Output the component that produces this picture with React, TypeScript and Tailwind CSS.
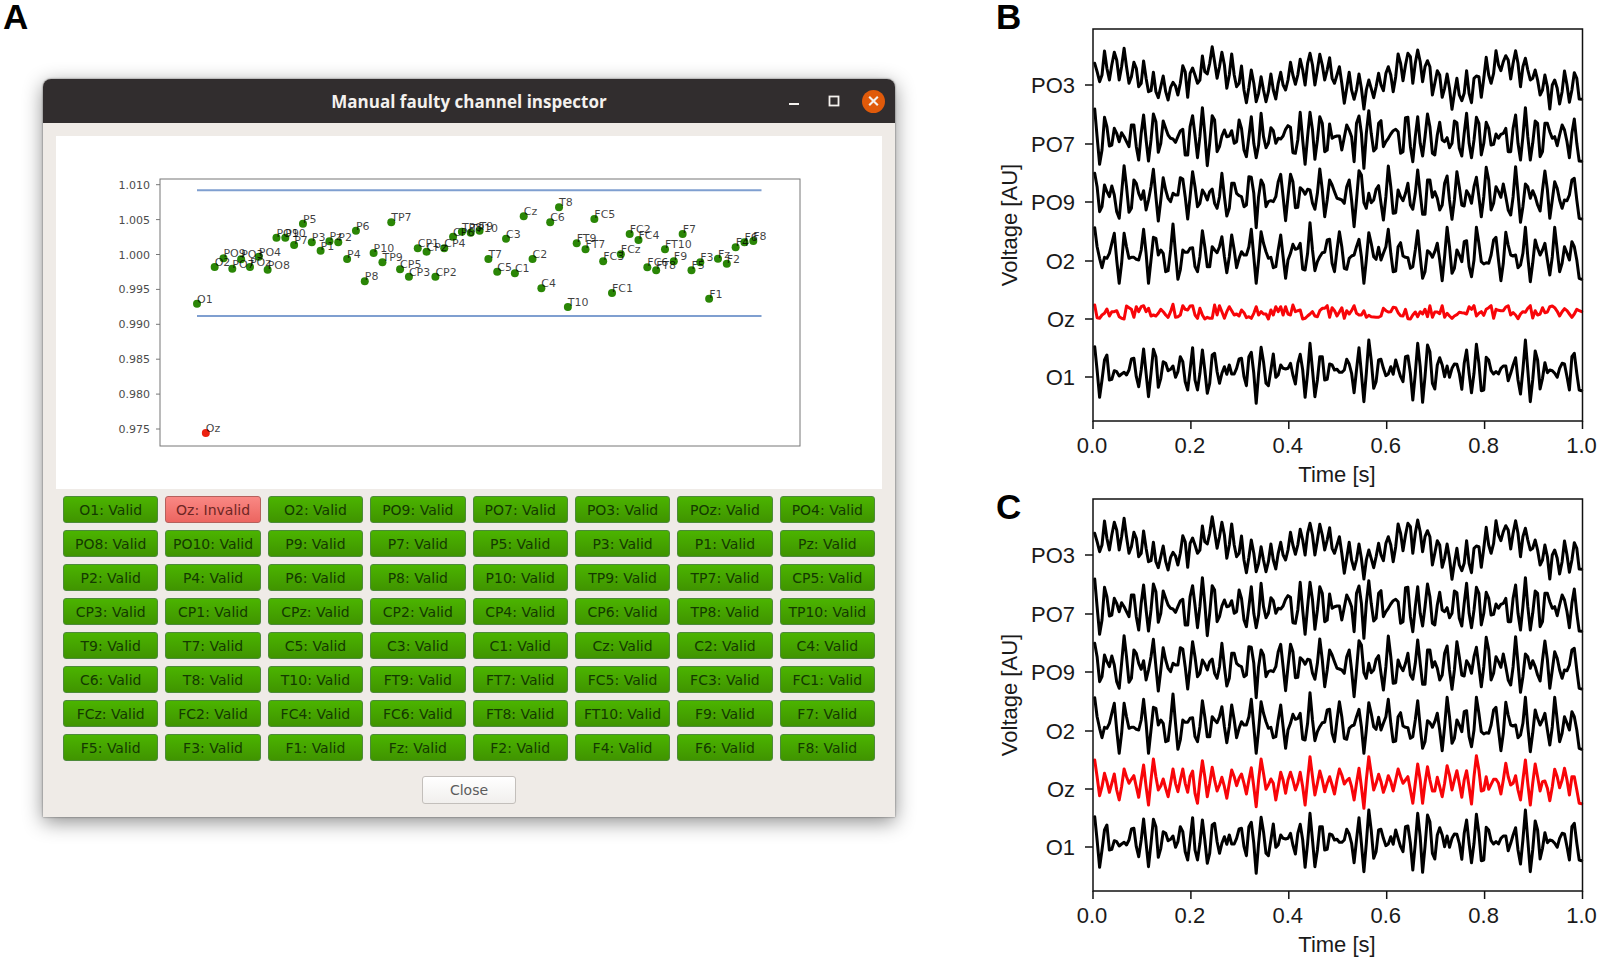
import { useState } from "react";

type Channel = { name: string; level: number };

// level is the vertical position of the channel inside the scatter plot
const channels: Channel[] = [
  { name: "O1", level: 401 }, { name: "Oz", level: 789 }, { name: "O2", level: 291 }, { name: "PO9", level: 265 },
  { name: "PO7", level: 296 }, { name: "PO3", level: 268 }, { name: "POz", level: 291 }, { name: "PO4", level: 260 },
  { name: "PO8", level: 299 }, { name: "PO10", level: 203 }, { name: "P9", level: 203 }, { name: "P7", level: 225 },
  { name: "P5", level: 161 }, { name: "P3", level: 217 }, { name: "P1", level: 242 }, { name: "Pz", level: 214 },
  { name: "P2", level: 217 }, { name: "P4", level: 267 }, { name: "P6", level: 182 }, { name: "P8", level: 334 },
  { name: "P10", level: 249 }, { name: "TP9", level: 277 }, { name: "TP7", level: 157 }, { name: "CP5", level: 298 },
  { name: "CP3", level: 320 }, { name: "CP1", level: 235 }, { name: "CPz", level: 245 }, { name: "CP2", level: 320 },
  { name: "CP4", level: 235 }, { name: "CP6", level: 200 }, { name: "TP8", level: 185 }, { name: "TP10", level: 188 },
  { name: "T9", level: 182 }, { name: "T7", level: 267 }, { name: "C5", level: 305 }, { name: "C3", level: 206 },
  { name: "C1", level: 310 }, { name: "Cz", level: 139 }, { name: "C2", level: 267 }, { name: "C4", level: 355 },
  { name: "C6", level: 157 }, { name: "T8", level: 112 }, { name: "T10", level: 411 }, { name: "FT9", level: 220 },
  { name: "FT7", level: 238 }, { name: "FC5", level: 147 }, { name: "FC3", level: 274 }, { name: "FC1", level: 369 },
  { name: "FCz", level: 253 }, { name: "FC2", level: 192 }, { name: "FC4", level: 210 }, { name: "FC6", level: 292 },
  { name: "FT8", level: 301 }, { name: "FT10", level: 238 }, { name: "F9", level: 274 }, { name: "F7", level: 192 },
  { name: "F5", level: 301 }, { name: "F3", level: 277 }, { name: "F1", level: 386 }, { name: "Fz", level: 266 },
  { name: "F2", level: 281 }, { name: "F4", level: 232 }, { name: "F6", level: 217 }, { name: "F8", level: 213 },
];

const scatterTicks = ["1.010", "1.005", "1.000", "0.995", "0.990", "0.985", "0.980", "0.975"];

// One second of signal per channel, sampled every 5 ms
const po3 = [
  190, 215, 245, 225, 153, 205, 240, 195, 157, 180, 240, 200, 145, 200, 250, 230, 187, 205, 260, 250,
  183, 235, 275, 272, 217, 275, 293, 260, 228, 275, 300, 262, 247, 258, 285, 250, 197, 215, 292, 220,
  204, 225, 250, 240, 168, 215, 222, 190, 140, 185, 235, 200, 157, 195, 265, 225, 162, 225, 260, 250,
  198, 270, 308, 262, 210, 250, 305, 280, 230, 270, 305, 275, 222, 270, 297, 250, 217, 255, 270, 240,
  187, 225, 253, 225, 178, 210, 255, 190, 160, 195, 255, 210, 163, 195, 240, 210, 173, 235, 250, 225,
  200, 250, 310, 265, 217, 270, 298, 270, 222, 265, 327, 270, 240, 265, 293, 260, 220, 255, 272, 220,
  200, 225, 275, 230, 162, 190, 242, 195, 160, 170, 250, 190, 150, 185, 245, 200, 182, 200, 285, 250,
  212, 225, 292, 265, 222, 265, 328, 280, 235, 285, 302, 280, 212, 280, 308, 235, 228, 230, 292, 235,
  172, 225, 250, 220, 152, 195, 212, 185, 167, 180, 237, 190, 152, 190, 260, 200, 175, 210, 240, 235,
  210, 240, 285, 270, 225, 260, 327, 255, 240, 265, 312, 275, 213, 255, 307, 270, 218, 235, 297, 298,
];

const po7 = [
  327, 410, 493, 450, 352, 380, 438, 435, 385, 400, 425, 398, 410, 425, 440, 375, 375, 440, 480, 400,
  345, 420, 483, 420, 342, 365, 457, 430, 363, 385, 405, 415, 417, 427, 410, 393, 388, 465, 465, 380,
  347, 405, 473, 410, 323, 400, 497, 430, 347, 360, 455, 440, 408, 390, 410, 408, 392, 430, 425, 360,
  385, 450, 470, 410, 350, 430, 473, 435, 340, 410, 443, 430, 383, 392, 430, 415, 417, 408, 388, 377,
  382, 458, 460, 420, 337, 420, 493, 410, 337, 390, 478, 420, 350, 370, 455, 450, 372, 415, 410, 408,
  408, 450, 412, 375, 390, 410, 485, 370, 348, 400, 505, 400, 332, 400, 453, 445, 370, 362, 440, 425,
  415, 402, 392, 388, 395, 460, 455, 353, 352, 440, 485, 410, 350, 430, 468, 410, 342, 380, 460, 465,
  405, 367, 420, 425, 413, 443, 430, 363, 368, 445, 468, 400, 340, 430, 473, 420, 352, 370, 465, 430,
  367, 385, 435, 433, 402, 415, 403, 400, 385, 455, 455, 385, 345, 430, 480, 410, 323, 410, 480, 430,
  363, 370, 470, 455, 370, 370, 395, 415, 410, 437, 405, 375, 390, 425, 473, 400, 357, 430, 483, 484,
];

const po9 = [
  520, 560, 635, 620, 555, 575, 590, 558, 585, 635, 655, 580, 497, 560, 637, 625, 540, 550, 580, 598,
  572, 630, 600, 560, 508, 590, 663, 600, 533, 570, 595, 605, 580, 585, 585, 533, 537, 590, 657, 590,
  515, 560, 620, 610, 570, 582, 600, 575, 567, 610, 625, 590, 520, 590, 648, 625, 550, 550, 580, 587,
  590, 620, 615, 530, 532, 580, 683, 590, 540, 555, 620, 605, 602, 605, 590, 545, 523, 590, 662, 590,
  523, 545, 623, 622, 563, 570, 583, 568, 570, 610, 628, 580, 507, 570, 650, 600, 540, 555, 575, 595,
  597, 600, 610, 560, 540, 600, 680, 600, 512, 525, 608, 625, 580, 608, 600, 568, 557, 610, 660, 590,
  498, 560, 640, 638, 570, 590, 602, 580, 550, 615, 628, 580, 510, 580, 643, 643, 540, 540, 592, 575,
  595, 630, 615, 550, 528, 600, 658, 600, 515, 560, 615, 618, 572, 585, 610, 560, 532, 590, 650, 590,
  502, 540, 630, 610, 560, 575, 592, 552, 590, 630, 645, 590, 500, 580, 667, 620, 552, 560, 595, 572,
  590, 615, 633, 570, 513, 570, 655, 600, 545, 565, 600, 625, 600, 602, 585, 540, 535, 600, 655, 657,
];

const o2 = [
  683, 740, 775, 803, 772, 775, 760, 730, 700, 780, 850, 790, 700, 740, 775, 772, 772, 778, 780, 750,
  688, 760, 850, 780, 712, 715, 765, 750, 760, 815, 812, 750, 672, 760, 838, 810, 750, 757, 757, 745,
  743, 800, 815, 770, 692, 740, 800, 800, 740, 750, 758, 740, 710, 770, 818, 770, 705, 750, 803, 775,
  755, 765, 765, 740, 688, 770, 850, 780, 695, 730, 755, 775, 772, 803, 800, 750, 705, 770, 835, 780,
  760, 733, 748, 745, 730, 807, 810, 760, 668, 750, 812, 785, 770, 758, 757, 720, 718, 790, 815, 750,
  695, 740, 805, 808, 775, 768, 765, 740, 718, 770, 850, 780, 698, 730, 770, 778, 742, 780, 760, 740,
  688, 760, 815, 813, 740, 728, 768, 772, 773, 805, 800, 750, 692, 770, 835, 815, 752, 758, 772, 755,
  730, 780, 842, 770, 682, 740, 820, 805, 750, 765, 785, 725, 722, 800, 830, 780, 682, 730, 785, 792,
  788, 790, 765, 720, 712, 780, 842, 790, 697, 735, 765, 768, 765, 803, 795, 760, 682, 770, 845, 790,
  720, 745, 765, 750, 730, 780, 825, 770, 682, 750, 815, 790, 740, 760, 780, 725, 740, 780, 835, 838,
];

const ozFaulty = [
  195, 233, 235, 225, 220, 207, 228, 215, 215, 212, 230, 235, 237, 198, 203, 208, 232, 200, 215, 200,
  197, 215, 205, 228, 225, 228, 220, 208, 215, 225, 232, 215, 193, 232, 230, 225, 197, 208, 210, 198,
  197, 225, 235, 205, 225, 237, 232, 235, 235, 195, 225, 197, 215, 235, 215, 200, 212, 225, 222, 228,
  210, 218, 233, 230, 235, 220, 200, 225, 215, 222, 222, 237, 210, 225, 200, 215, 200, 225, 200, 222,
  225, 195, 215, 212, 210, 237, 235, 228, 222, 215, 228, 230, 212, 205, 205, 197, 232, 203, 212, 228,
  216, 203, 235, 212, 222, 212, 197, 220, 225, 225, 212, 232, 226, 230, 231, 232, 232, 228, 205, 212,
  216, 215, 202, 203, 218, 227, 228, 208, 236, 237, 225, 216, 230, 215, 222, 208, 230, 197, 232, 216,
  216, 221, 197, 232, 220, 228, 235, 228, 224, 217, 218, 219, 222, 200, 208, 197, 228, 220, 215, 226,
  208, 203, 197, 235, 208, 211, 212, 212, 201, 197, 225, 218, 225, 236, 222, 215, 217, 205, 197, 234,
  212, 225, 222, 203, 218, 216, 200, 198, 203, 214, 228, 215, 206, 212, 222, 232, 222, 208, 212, 215,
];

const ozRepaired = [
  60, 110, 167, 140, 100, 125, 157, 130, 102, 150, 180, 140, 87, 110, 130, 118, 107, 140, 172, 120,
  75, 140, 195, 120, 57, 110, 150, 138, 117, 145, 170, 130, 87, 130, 155, 120, 87, 130, 157, 110,
  93, 160, 190, 120, 62, 110, 170, 130, 82, 120, 153, 135, 112, 140, 175, 130, 90, 110, 137, 115,
  102, 130, 162, 120, 83, 140, 200, 120, 57, 100, 148, 135, 117, 130, 180, 140, 97, 120, 160, 120,
  97, 120, 150, 130, 97, 140, 195, 120, 50, 110, 165, 130, 93, 120, 155, 130, 110, 135, 162, 120,
  87, 105, 132, 122, 115, 140, 180, 130, 85, 140, 205, 120, 50, 100, 150, 130, 103, 125, 157, 135,
  107, 125, 153, 120, 87, 110, 130, 120, 110, 150, 190, 130, 72, 120, 190, 130, 80, 120, 153, 153,
  112, 140, 170, 130, 77, 105, 150, 120, 92, 130, 172, 120, 92, 140, 192, 110, 47, 90, 153, 150,
  110, 148, 133, 118, 118, 130, 162, 120, 70, 110, 135, 130, 107, 150, 180, 120, 60, 130, 195, 130,
  72, 110, 153, 125, 123, 145, 182, 140, 88, 110, 143, 120, 85, 120, 165, 110, 110, 150, 190, 191,
];

const o1 = [
  320, 390, 472, 420, 360, 345, 420, 418, 392, 395, 408, 402, 397, 405, 390, 357, 355, 410, 440, 390,
  327, 400, 470, 400, 328, 350, 442, 415, 365, 370, 392, 388, 378, 412, 395, 350, 365, 425, 450, 390,
  323, 420, 450, 400, 330, 390, 460, 430, 345, 340, 395, 430, 400, 380, 403, 375, 402, 402, 385, 357,
  355, 410, 437, 350, 337, 400, 490, 400, 322, 365, 430, 437, 390, 342, 412, 405, 375, 385, 387, 385,
  370, 405, 432, 370, 343, 390, 472, 400, 310, 390, 470, 420, 350, 350, 420, 418, 372, 375, 390, 388,
  397, 397, 390, 358, 372, 400, 458, 390, 323, 400, 485, 400, 300, 360, 445, 425, 360, 358, 385, 407,
  402, 380, 403, 360, 385, 410, 425, 350, 348, 400, 480, 400, 310, 380, 487, 410, 315, 335, 430, 447,
  375, 353, 375, 410, 378, 412, 385, 372, 373, 400, 448, 370, 330, 400, 458, 400, 313, 370, 452, 450,
  352, 360, 392, 402, 395, 402, 385, 378, 378, 422, 400, 375, 353, 420, 462, 390, 300, 390, 485, 420,
  333, 360, 447, 415, 368, 398, 390, 392, 400, 412, 385, 370, 372, 410, 450, 350, 340, 400, 450, 452,
];

type Trace = { label: string; tick: number; shift: number; samples: number[]; color: string };

const makeTraces = (oz: number[], ozShift: number): Trace[] => [
  { label: "PO3", tick: 65, shift: -87, samples: po3, color: "#000" },
  { label: "PO7", tick: 124, shift: -87, samples: po7, color: "#000" },
  { label: "PO9", tick: 182, shift: -87, samples: po9, color: "#000" },
  { label: "O2", tick: 241, shift: -87, samples: o2, color: "#000" },
  { label: "Oz", tick: 299, shift: ozShift, samples: oz, color: "#f80509" },
  { label: "O1", tick: 357, shift: 633, samples: o1, color: "#000" },
];

const faultyTraces = makeTraces(ozFaulty, 633);
const repairedTraces = makeTraces(ozRepaired, 723);

const timeTicks = ["0.0", "0.2", "0.4", "0.6", "0.8", "1.0"];

function tracePoints({ samples, shift }: Trace) {
  return samples.map((v, i) => `${(102.7 + i * 2.447).toFixed(1)},${(9 + (v + shift) / 3).toFixed(1)}`).join(" ");
}

function SignalPlot({ title, traces }: { title: string; traces: Trace[] }) {
  return (
    <svg viewBox="0 0 608 470" className="block w-full font-['Liberation_Sans',Arial,sans-serif] text-[22px]" role="img" aria-label={title}>
      {traces.map((trace) => (
        <g key={trace.label}>
          <polyline points={tracePoints(trace)} fill="none" stroke={trace.color} strokeWidth="3" strokeLinejoin="round" strokeLinecap="round" />
          <path d={`M93 ${trace.tick}h8`} stroke="#111" strokeWidth="1.5" />
          <text x="83" y={trace.tick + 8} textAnchor="end" fill="#1a1a1a">{trace.label}</text>
        </g>
      ))}
      <rect x="101" y="9" width="489.5" height="392" fill="none" stroke="#111" strokeWidth="1.5" />
      {timeTicks.map((label, i) => (
        <g key={label}>
          <path d={`M${101 + i * 97.9} 401v8`} stroke="#111" strokeWidth="1.5" />
          <text x={100 + i * 97.9} y="433" textAnchor="middle" fill="#1a1a1a">{label}</text>
        </g>
      ))}
      <text x="345" y="462" textAnchor="middle" fill="#1a1a1a">Time [s]</text>
      <text transform="translate(25 205) rotate(-90)" textAnchor="middle" fill="#1a1a1a">Voltage [AU]</text>
    </svg>
  );
}

function ScatterPlot({ invalid }: { invalid: string[] }) {
  return (
    <svg viewBox="0 0 826 353" className="block w-full bg-white font-['DejaVu_Sans',sans-serif] text-[11px]" role="img" aria-label="Channel levels">
      <rect x="104" y="43" width="640" height="267" fill="none" stroke="#777" />
      {scatterTicks.map((label, i) => (
        <g key={label}>
          <path d={`M100 ${48.7 + i * 34.9}h4`} stroke="#777" />
          <text x="94" y={52.7 + i * 34.9} textAnchor="end" fill="#4c4c4c">{label}</text>
        </g>
      ))}
      <path d="M141 54.3H705.500M141 180H705.500" stroke="#7f9fd0" strokeWidth="2" />
      {channels.map(({ name, level }, i) => (
        <circle key={name} cx={141 + i * 8.83} cy={34 + level / 3} r="4" fill={invalid.includes(name) ? "#ec2110" : "#2a8606"} />
      ))}
      {channels.map(({ name, level }, i) => (
        <text key={name} x={141 + i * 8.83} y={33 + level / 3} fill="#000" fillOpacity="0.75">{name}</text>
      ))}
    </svg>
  );
}

function TitleBar() {
  return (
    <header className="grid h-11 grid-cols-[1fr_auto_1fr] items-center rounded-t-lg bg-[#312d2e] text-[#f4f1ee]">
      <h1 className="col-start-2 pt-0.5 font-['Open_Sans','Noto_Sans',sans-serif] text-[17px] font-bold">Manual faulty channel inspector</h1>
      <div className="mr-2.5 flex items-center justify-end gap-4">
        <button type="button" aria-label="Minimize" className="flex size-6 items-center justify-center">
          <svg viewBox="0 0 24 24" className="size-6"><path d="M7 15h10" stroke="currentColor" strokeWidth="2" /></svg>
        </button>
        <button type="button" aria-label="Maximize" className="flex size-6 items-center justify-center">
          <svg viewBox="0 0 24 24" className="size-6"><rect x="7.500" y="7.500" width="9" height="9" fill="none" stroke="currentColor" strokeWidth="1.800" /></svg>
        </button>
        <button type="button" aria-label="Close window" className="flex size-[23px] items-center justify-center rounded-full bg-[#e05a0a]">
          <svg viewBox="0 0 24 24" className="size-6"><path d="M7.500 7.500l9 9M16.500 7.500l-9 9" stroke="currentColor" strokeWidth="2.200" /></svg>
        </button>
      </div>
    </header>
  );
}

export default function App() {
  const [invalid, setInvalid] = useState<string[]>(["Oz"]);

  const toggle = (name: string) =>
    setInvalid((prev) => (prev.includes(name) ? prev.filter((n) => n !== name) : [...prev, name]));

  return (
    <main className="grid grid-cols-[62fr_38fr] bg-white font-['DejaVu_Sans',sans-serif]">
      <section>
        <h2 className="h-[79px] pl-[3px] font-['Liberation_Sans',Arial,sans-serif] text-[35px] leading-[34px] font-bold text-black">A</h2>
        <div className="mr-[97px] ml-[43px] rounded-t-lg bg-[#efebe7] shadow-[0_5px_20px_rgba(0,0,0,0.45),0_0_2px_rgba(0,0,0,0.6)]">
          <TitleBar />
          <div className="px-[13px] pt-[13px] pb-[13px]">
            <ScatterPlot invalid={invalid} />
            <div className="mt-[7px] grid grid-cols-8 gap-[7px] px-[7px]">
              {channels.map(({ name }) => {
                const bad = invalid.includes(name);
                return (
                  <button
                    key={name}
                    type="button"
                    aria-pressed={bad}
                    onClick={() => toggle(name)}
                    className={`h-[27px] rounded-[3px] border text-sm leading-none whitespace-nowrap ${
                      bad
                        ? "border-[#b5605c] bg-linear-to-b from-[#f98884] to-[#ec6560] text-[#6e2624]"
                        : "border-[#4d8a3a] bg-linear-to-b from-[#4bb400] to-[#409400] text-[#143a00]"
                    }`}
                  >
                    {name}: {bad ? "Invalid" : "Valid"}
                  </button>
                );
              })}
            </div>
            <div className="mt-[15px] flex justify-center">
              <button type="button" className="h-7 w-[94px] rounded-[3px] border border-[#c3bfbb] bg-linear-to-b from-white to-[#f1efed] text-sm leading-none text-[#5c5c5c]">
                Close
              </button>
            </div>
          </div>
        </div>
      </section>

      <div>
        <section className="relative pt-5">
          <h2 className="absolute top-0 left-1 font-['Liberation_Sans',Arial,sans-serif] text-[35px] leading-[34px] font-bold text-black">B</h2>
          <SignalPlot title="Signals with a faulty channel" traces={faultyTraces} />
        </section>
        <section className="relative">
          <h2 className="absolute top-0 left-1 font-['Liberation_Sans',Arial,sans-serif] text-[35px] leading-[34px] font-bold text-black">C</h2>
          <SignalPlot title="Signals after interpolation" traces={repairedTraces} />
        </section>
      </div>
    </main>
  );
}
